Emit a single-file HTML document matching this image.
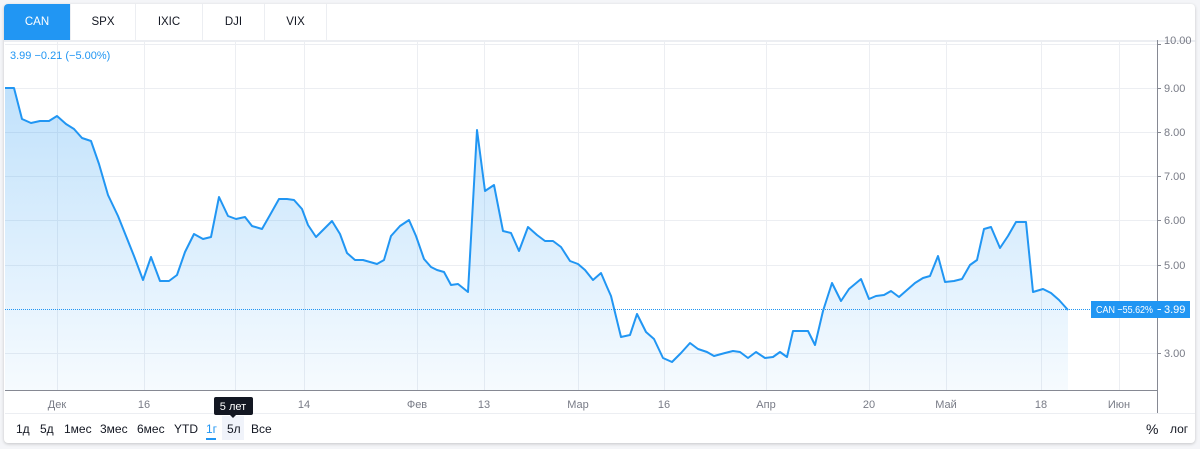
<!DOCTYPE html>
<html><head><meta charset="utf-8"><style>
body{margin:0;width:1200px;height:449px;background:#f4f5f8;font-family:"Liberation Sans",sans-serif;overflow:hidden;position:relative}
.card{position:absolute;left:4px;top:4px;width:1191px;height:439px;background:#fff;border-radius:4px;box-shadow:0 1px 3px rgba(0,0,0,.2);overflow:hidden}
.tabs{position:absolute;left:0;top:0;height:36px;display:flex;border-bottom:2px solid #eceef2;width:100%}
.tab{width:66px;height:36px;line-height:36px;text-align:center;font-size:11.5px;color:#131722;border-right:1px solid #eceef2}
.tab.a{background:#2196f3;color:#fff}
</style></head><body>
<div class="card">
<div class="tabs"><div class="tab a">CAN</div><div class="tab" style="width:64px">SPX</div><div class="tab">IXIC</div><div class="tab" style="width:61px">DJI</div><div class="tab" style="width:61px">VIX</div></div>
</div>
<svg width="1200" height="449" style="position:absolute;left:0;top:0" font-family="Liberation Sans, sans-serif">
<defs><linearGradient id="g" x1="0" y1="0" x2="0" y2="1"><stop offset="0" stop-color="#2196f3" stop-opacity=".28"/><stop offset="1" stop-color="#2196f3" stop-opacity=".04"/></linearGradient></defs>
<g stroke="#eceef2" stroke-width="1">
<line x1="5" x2="1157" y1="44.5" y2="44.5"/><line x1="5" x2="1157" y1="88.5" y2="88.5"/><line x1="5" x2="1157" y1="132.5" y2="132.5"/><line x1="5" x2="1157" y1="176.5" y2="176.5"/><line x1="5" x2="1157" y1="220.5" y2="220.5"/><line x1="5" x2="1157" y1="265.5" y2="265.5"/><line x1="5" x2="1157" y1="353.5" y2="353.5"/>
<line x1="57.5" x2="57.5" y1="42" y2="390"/><line x1="144.5" x2="144.5" y1="42" y2="390"/><line x1="235.5" x2="235.5" y1="42" y2="390"/><line x1="304.5" x2="304.5" y1="42" y2="390"/><line x1="417.5" x2="417.5" y1="42" y2="390"/><line x1="484.5" x2="484.5" y1="42" y2="390"/><line x1="578.5" x2="578.5" y1="42" y2="390"/><line x1="664.5" x2="664.5" y1="42" y2="390"/><line x1="766.5" x2="766.5" y1="42" y2="390"/><line x1="869.5" x2="869.5" y1="42" y2="390"/><line x1="946.5" x2="946.5" y1="42" y2="390"/><line x1="1041.5" x2="1041.5" y1="42" y2="390"/><line x1="1119.5" x2="1119.5" y1="42" y2="390"/>
</g>
<polygon fill="url(#g)" points="5,390 5,88 14,88 22,119 31,123 40,121 49,121 57,116 66,124 74,129 82,138 91,141 99,164 108,195 118,216 126,236 134,256 143,280 151,257 160,281 169,281 177,275 185,252 194,234 203,239 211,237 219,197 228,216 236,219 245,217 252,226 262,229 270,215 279,199 287,199 294,200 302,209 308,225 316,237 322,231 332,221 340,234 347,253 355,260 363,260 370,262 377,264 384,260 391,236 400,226 409,220 416,236 424,259 431,267 437,270 444,272 451,285 458,284 468,292 477,130 485,191 494,185 503,231 511,233 519,251 528,227 537,235 545,241 553,241 561,247 570,261 578,264 585,270 593,280 601,273 607,287 611,296 621,337 630,335 637,314 646,332 654,339 663,358 672,362 681,353 690,343 698,349 707,352 714,356 725,353 733,351 740,352 748,358 756,352 765,358 773,357 780,352 787,357 793,331 801,331 808,331 815,345 823,311 832,283 841,301 849,289 861,279 869,299 876,296 884,295 891,291 899,297 907,290 915,283 923,278 930,276 938,256 945,282 954,281 962,279 970,265 977,260 984,229 991,227 1000,248 1008,236 1016,222 1026,222 1033,292 1043,289 1051,293 1059,300 1068,310 1068,390"/>
<polyline fill="none" stroke="#2196f3" stroke-width="2" stroke-linejoin="round" points="5,88 14,88 22,119 31,123 40,121 49,121 57,116 66,124 74,129 82,138 91,141 99,164 108,195 118,216 126,236 134,256 143,280 151,257 160,281 169,281 177,275 185,252 194,234 203,239 211,237 219,197 228,216 236,219 245,217 252,226 262,229 270,215 279,199 287,199 294,200 302,209 308,225 316,237 322,231 332,221 340,234 347,253 355,260 363,260 370,262 377,264 384,260 391,236 400,226 409,220 416,236 424,259 431,267 437,270 444,272 451,285 458,284 468,292 477,130 485,191 494,185 503,231 511,233 519,251 528,227 537,235 545,241 553,241 561,247 570,261 578,264 585,270 593,280 601,273 607,287 611,296 621,337 630,335 637,314 646,332 654,339 663,358 672,362 681,353 690,343 698,349 707,352 714,356 725,353 733,351 740,352 748,358 756,352 765,358 773,357 780,352 787,357 793,331 801,331 808,331 815,345 823,311 832,283 841,301 849,289 861,279 869,299 876,296 884,295 891,291 899,297 907,290 915,283 923,278 930,276 938,256 945,282 954,281 962,279 970,265 977,260 984,229 991,227 1000,248 1008,236 1016,222 1026,222 1033,292 1043,289 1051,293 1059,300 1068,310"/>
<line x1="5" x2="1092" y1="309.5" y2="309.5" stroke="#2196f3" stroke-dasharray="1 1"/>
<line x1="5" x2="1157" y1="390.5" y2="390.5" stroke="#868993"/>
<line x1="1157.5" x2="1157.5" y1="40" y2="413" stroke="#868993"/>
<g stroke="#868993"><line x1="1157" x2="1161" y1="44.5" y2="44.5"/><line x1="1157" x2="1161" y1="88.5" y2="88.5"/><line x1="1157" x2="1161" y1="132.5" y2="132.5"/><line x1="1157" x2="1161" y1="176.5" y2="176.5"/><line x1="1157" x2="1161" y1="220.5" y2="220.5"/><line x1="1157" x2="1161" y1="265.5" y2="265.5"/><line x1="1157" x2="1161" y1="353.5" y2="353.5"/></g>
<g fill="#787b86" font-size="11">
<text x="1164" y="44">10.00</text><text x="1164" y="92">9.00</text><text x="1164" y="136">8.00</text><text x="1164" y="180">7.00</text><text x="1164" y="224">6.00</text><text x="1164" y="269">5.00</text><text x="1164" y="357">3.00</text>
<g text-anchor="middle"><text x="57" y="408">Дек</text><text x="144" y="408">16</text><text x="304" y="408">14</text><text x="417" y="408">Фев</text><text x="484" y="408">13</text><text x="578" y="408">Мар</text><text x="664" y="408">16</text><text x="766" y="408">Апр</text><text x="869" y="408">20</text><text x="946" y="408">Май</text><text x="1041" y="408">18</text><text x="1119" y="408">Июн</text></g>
</g>
<line x1="5" x2="1195" y1="413.5" y2="413.5" stroke="#eceef2"/>
<rect x="1091" y="301" width="99" height="17" fill="#2196f3"/>
<text x="1096" y="313" fill="#fff" font-size="10.5" textLength="57" lengthAdjust="spacingAndGlyphs">CAN −55.62%</text><line x1="1157.5" x2="1161" y1="309.5" y2="309.5" stroke="#fff"/><text x="1164" y="313" fill="#fff" font-size="11">3.99</text>
<text x="10" y="59" fill="#2196f3" font-size="11">3.99 −0.21 (−5.00%)</text>
<rect x="222" y="416" width="22" height="24" fill="#f0f3fa"/>
<rect x="214" y="397" width="39" height="18" rx="2" fill="#131722"/><polygon points="230,415 236,415 233,418" fill="#131722"/>
<text x="233" y="410" fill="#fff" font-size="11" text-anchor="middle">5 лет</text>
<g font-size="12" fill="#131722"><text x="16" y="433">1д</text><text x="40" y="433">5д</text><text x="64" y="433">1мес</text><text x="100" y="433">3мес</text><text x="137" y="433">6мес</text><text x="174" y="433">YTD</text><text x="206" y="433" fill="#2196f3">1г</text><text x="227" y="433">5л</text><text x="251" y="433">Все</text><text x="1146" y="434" font-size="14">%</text><text x="1170" y="433">лог</text></g>
<rect x="206" y="438" width="10" height="2" fill="#2196f3"/>
</svg>
</body></html>
